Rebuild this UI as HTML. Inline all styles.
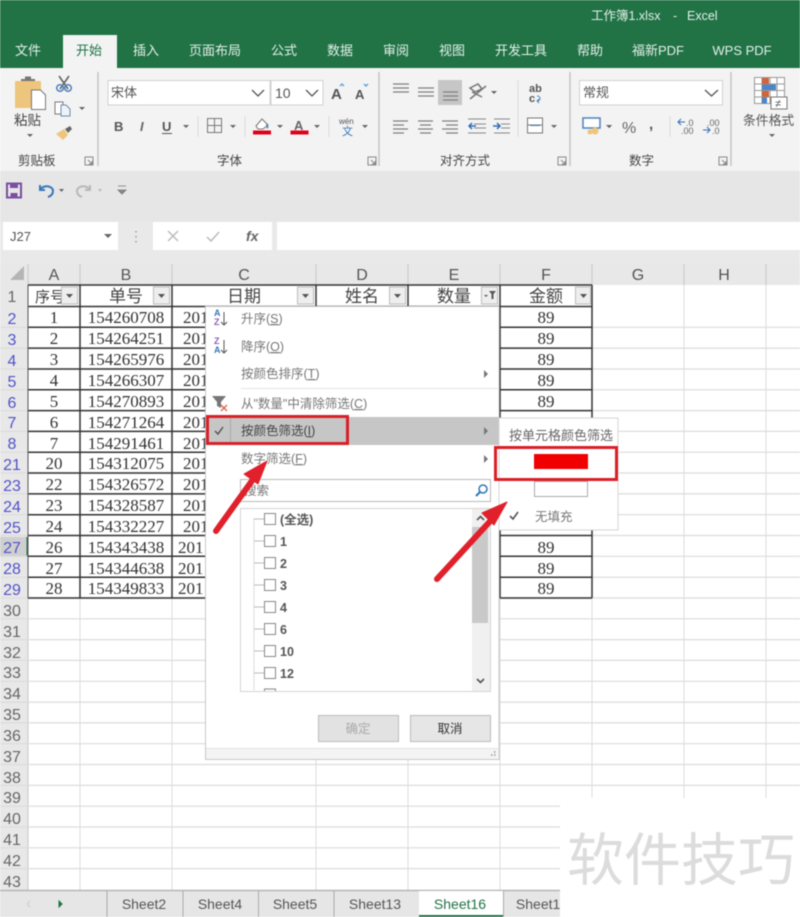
<!DOCTYPE html>
<html lang="zh"><head><meta charset="utf-8"><title>工作簿1.xlsx - Excel</title>
<style>
html,body{margin:0;padding:0;background:#fff;width:800px;height:917px;overflow:hidden}
svg{display:block;filter:blur(.6px)}
text{font-family:"Liberation Sans","Noto Sans CJK SC",sans-serif}
.rib{font-size:12.5px;fill:#555}
.tab{font-size:13px;fill:#e4efe9;text-anchor:middle}
.rh{font-size:16px;fill:#5252c8;text-anchor:middle}
.rg{font-size:16px;fill:#666;text-anchor:middle}
.ch{font-size:16px;fill:#555;text-anchor:middle}
.d{font-family:"Liberation Serif","Noto Serif CJK SC",serif;font-size:17px;fill:#333;text-anchor:middle}
.l{font-family:"Liberation Serif",serif;font-size:17px;fill:#333}
.h{font-family:"Noto Sans CJK SC",sans-serif;font-size:17px;fill:#444;text-anchor:middle}
.m{font-size:12.5px;fill:#777}
.it{font-size:12.5px;fill:#555;font-weight:bold}
.st{font-size:14px;fill:#555;text-anchor:middle}
</style></head><body>
<svg width="800" height="917" viewBox="0 0 800 917" xmlns="http://www.w3.org/2000/svg">
<rect width="800" height="917" fill="#fff"/>
<!-- title / tabs -->
<rect width="800" height="68" fill="#217346"/>
<text x="591" y="20" font-size="12.5" fill="#e4efe9">工作簿1.xlsx</text><text x="673" y="20" font-size="12.5" fill="#e4efe9">-</text><text x="687" y="20" font-size="12.5" fill="#e4efe9">Excel</text>
<rect x="63" y="35" width="54" height="34" fill="#f3f3f3"/>
<text class="tab" x="28" y="55">文件</text><text class="tab" x="89" y="55" style="fill:#217346">开始</text><text class="tab" x="146" y="55">插入</text><text class="tab" x="215" y="55">页面布局</text><text class="tab" x="284" y="55">公式</text><text class="tab" x="340" y="55">数据</text><text class="tab" x="396" y="55">审阅</text><text class="tab" x="452" y="55">视图</text><text class="tab" x="521" y="55">开发工具</text><text class="tab" x="590" y="55">帮助</text><text class="tab" x="658" y="55">福新PDF</text><text class="tab" x="742" y="55">WPS PDF</text>
<!-- ribbon -->
<rect y="68" width="800" height="103" fill="#f3f3f3"/>
<path d="M98 72V166M379 72V166M570 72V166M731 72V166" stroke="#c6c6c6" stroke-width="1.5"/>
<path d="M198 116V137M245 116V137M329 116V137M518 80V137M670 116V137" stroke="#dcdcdc" stroke-width="1"/>
<!-- paste -->
<rect x="15" y="81" width="26" height="27" rx="1" fill="#eec57c"/><path d="M21 81h14v-2h-4v-2.500h-6V79h-4z" fill="#777"/>
<path d="M31.500 90h9l5 5v14.500h-14z" fill="#fff" stroke="#777"/>
<text class="rib" x="14" y="125" style="font-size:13.500px;fill:#444">粘贴</text><path d="M27 134h6l-3 3z" fill="#666"/>
<!-- cut/copy/brush -->
<path d="M59 76l9 13M69 76l-9 13" stroke="#666" stroke-width="1.600" fill="none"/><circle cx="60" cy="88" r="3.300" fill="none" stroke="#4f81bd" stroke-width="1.500"/><circle cx="68" cy="88" r="3.300" fill="none" stroke="#4f81bd" stroke-width="1.500"/>
<path d="M55 102h8v12h-8z" fill="#fff" stroke="#777"/><path d="M61 105h5l4 4v7h-9z" fill="#eef3f9" stroke="#6a8db5"/><path d="M79 107h6l-3 3z" fill="#666"/>
<path d="M56 134l8-5 4 6-5 5z" fill="#eec57c"/><path d="M65 129l5-3 2 3-4 4z" fill="#666"/>
<text class="rib" x="18" y="165" style="fill:#444">剪贴板</text>
<path d="M85 157h8v8h-8z M88 160l4 4m0-3v3h-3" fill="none" stroke="#888"/>
<path d="M368 157h8v8h-8z M371 160l4 4m0-3v3h-3" fill="none" stroke="#888"/>
<path d="M558 157h8v8h-8z M561 160l4 4m0-3v3h-3" fill="none" stroke="#888"/>
<path d="M719 157h8v8h-8z M722 160l4 4m0-3v3h-3" fill="none" stroke="#888"/>
<!-- font -->
<rect x="108" y="80.500" width="162" height="24.500" fill="#fff" stroke="#d0d0d0"/><rect x="271" y="80.500" width="52" height="24.500" fill="#fff" stroke="#d0d0d0"/>
<text class="rib" x="111" y="97" style="font-size:13px">宋体</text><text class="rib" x="275" y="98" style="font-size:14px">10</text>
<path d="M252 90l6 6 6-6M306 90l6 6 6-6" fill="none" stroke="#555" stroke-width="1.300"/>
<text x="331" y="99" font-size="15" fill="#555" font-weight="bold">A</text><path d="M340 86l2-2 2 2" fill="none" stroke="#5b9bd5" stroke-width="1.300"/>
<text x="355" y="99" font-size="13" fill="#555" font-weight="bold">A</text><path d="M364 84l2 2 2-2" fill="none" stroke="#5b9bd5" stroke-width="1.300"/>
<text x="114" y="131" font-size="13" fill="#555" font-weight="bold">B</text><text x="140" y="131" font-size="13" fill="#666" font-style="italic" font-family="Liberation Serif" font-weight="bold">I</text><text x="162" y="131" font-size="13" fill="#555" font-weight="bold">U</text><path d="M162 133.500h10" stroke="#555"/>
<path d="M183 125h6l-3 3zM230 125h6l-3 3zM277 125h6l-3 3zM314 125h6l-3 3zM362 125h6l-3 3zM606 125h6l-3 3z" fill="#666"/>
<path d="M207.500 118.500h14v14h-14zM214.500 118.500v14M207.500 125.500h14" fill="none" stroke="#777"/>
<path d="M256 126l6-7 6 6-5 4h-5z" fill="#fff" stroke="#777"/><path d="M266 124c3 1 3 4 1 5z" fill="#4f81bd"/><rect x="253" y="130.500" width="18" height="4" fill="#e0001a"/>
<text x="294" y="130" font-size="13" fill="#666" font-weight="bold">A</text><rect x="290.500" y="130.500" width="18" height="4" fill="#e0001a"/>
<text x="339" y="124" font-size="8" fill="#555">wén</text><text x="342" y="135" font-size="11" fill="#3a78b8">文</text>
<text class="rib" x="217" y="165" style="fill:#444">字体</text>
<!-- align -->
<g fill="none" stroke="#808080" stroke-width="1.200">
<path d="M393 84h16M393 88h16M393 92h16"/><path d="M418 88h16M418 92h16M418 96h16"/>
<path d="M393 121h15M393 125h11M393 129h15M393 133h11"/><path d="M418 121h15M420 125h11M418 129h15M420 133h11"/><path d="M442 121h16M446 125h12M442 129h16M446 133h12"/>
</g>
<rect x="438" y="80" width="24" height="25" fill="#c6c6c6"/><path d="M443 92h15M443 96h15M443 100h15" stroke="#808080" stroke-width="1.200"/>
<path d="M470 88l8-4 4 5-7 3zM472 92l10 5M470 99l16-13" fill="none" stroke="#777" stroke-width="1.500"/><path d="M491 91h6l-3 3z" fill="#666"/>
<text x="529" y="92" font-size="11" fill="#555" font-weight="bold">ab</text><text x="529" y="102" font-size="11" fill="#555" font-weight="bold">c</text><path d="M537 96c4 0 4 5 0 5M539 99l-2 2 2 2" fill="none" stroke="#4f81bd"/>
<path d="M468 119h18M474 124h12M474 128h12M468 133h18" stroke="#888" fill="none"/>
<path d="M469 126h7M472 123l-3 3 3 3" stroke="#2f6eb5" fill="none" stroke-width="1.500"/>
<path d="M494 119h16M501 124h9M501 128h9M494 133h16" stroke="#888" fill="none"/><path d="M493 126h7M497 123l3 3-3 3" stroke="#2f6eb5" fill="none" stroke-width="1.500"/>
<rect x="527.500" y="118" width="15" height="15" fill="#fff" stroke="#777"/><path d="M527 125h16" stroke="#777"/><path d="M530 125.500h10" stroke="#4f81bd"/><path d="M551 125h6l-3 3z" fill="#666"/>
<text class="rib" x="440" y="165" style="fill:#444">对齐方式</text>
<!-- number -->
<rect x="579.500" y="80.500" width="143" height="24.500" fill="#fff" stroke="#d0d0d0"/><text class="rib" x="583" y="97" style="font-size:13px">常规</text><path d="M705 90l6.500 6 6.500-6" fill="none" stroke="#555" stroke-width="1.300"/>
<rect x="583" y="118" width="17" height="10" fill="#fff" stroke="#4f81bd" stroke-width="1.500"/><circle cx="595" cy="131" r="3.500" fill="#eec57c"/><circle cx="590" cy="132" r="2.500" fill="#eec57c"/>
<path d="M607 125h5l-2.500 3z" fill="#666"/>
<text x="622" y="133" font-size="16" fill="#666">%</text><text x="649" y="129" font-size="15" fill="#555" font-weight="bold">,</text>
<text x="686" y="126" font-size="9" fill="#666">.0</text><text x="681" y="134" font-size="9" fill="#666">.00</text><path d="M678 122h7M681 119l-3 3 3 3" stroke="#2f6eb5" fill="none"/>
<text x="707" y="126" font-size="9" fill="#666">.00</text><text x="712" y="134" font-size="9" fill="#666">.0</text><path d="M703 130h7M707 127l3 3-3 3" stroke="#2f6eb5" fill="none"/>
<text class="rib" x="629" y="165" style="fill:#444">数字</text>
<!-- cond -->
<path d="M754.500 77.500h30v26h-30zM754.500 84h30M754.500 90.500h30M754.500 97h30M762 77.500v26M770 77.500v26M777 77.500v26" fill="#fff" stroke="#999"/>
<rect x="762" y="78" width="7" height="6" fill="#d2643a"/><rect x="762" y="84.500" width="14" height="5.500" fill="#4a86c8"/><rect x="762" y="91" width="7" height="6" fill="#d2643a"/><rect x="762" y="97.500" width="5" height="6" fill="#4a86c8"/>
<rect x="771" y="97" width="16" height="12" fill="#fff" stroke="#777"/><text x="775" y="107" font-size="11" fill="#555">≠</text>
<text class="rib" x="743" y="125" style="fill:#555;font-size:12.800px">条件格式</text><path d="M769 134h6l-3 3z" fill="#666"/>
<!-- QAT -->
<rect y="171" width="800" height="50" fill="#e6e6e6"/>
<rect x="7" y="183.500" width="14" height="14" fill="none" stroke="#7a4ea0" stroke-width="2"/><rect x="10" y="183" width="8" height="5" fill="#7a4ea0"/><rect x="10.500" y="193" width="7" height="4" fill="#7a4ea0"/>
<path d="M40 185v5h5M40 190c4-6 13-4 13 1c0 3-2 5-5 6" fill="none" stroke="#3a78b8" stroke-width="2"/><path d="M59 189h5l-2.500 3z" fill="#666"/>
<path d="M90 185v5h-5M90 190c-4-6-13-4-13 1c0 3 2 5 5 6" fill="none" stroke="#b8b8b8" stroke-width="2"/><path d="M98 189h4l-2 3z" fill="#bbb"/>
<path d="M118 186h8M118 190h8l-4 4z" fill="#888" stroke="#777" stroke-width=".8"/>
<!-- formula bar -->
<rect y="221" width="800" height="43" fill="#e9e9e9"/>
<rect x="3" y="222" width="115" height="28" fill="#fff"/><text x="10" y="241" font-size="13" fill="#555">J27</text><path d="M104 234h8l-4 4z" fill="#666"/>
<path d="M136 231v1.500M136 236v1.500M136 241v1.500" stroke="#999" stroke-width="1.500"/>
<rect x="153" y="222" width="119" height="28" fill="#fff"/><rect x="277" y="222" width="523" height="28" fill="#fff"/>
<path d="M168 231l10 10M178 231l-10 10" stroke="#bbb" stroke-width="1.500"/><path d="M207 237l4 4 8-9" stroke="#bbb" stroke-width="1.500" fill="none"/>
<text x="246" y="241" font-size="14" fill="#666" font-style="italic" font-family="Liberation Serif" font-weight="bold">fx</text>
<!-- headers -->
<rect y="264" width="800" height="21" fill="#e8e8e8"/><rect y="285" width="28" height="605" fill="#e8e8e8"/>
<path d="M24 266v14h-14z" fill="#b5b5b5"/>
<path d="M28 264V890M80 264V285M172 264V285M316 264V285M408 264V285M500 264V285M592 264V285M684 264V285M766 264V285" stroke="#c8c8c8"/>
<rect y="537" width="28" height="20" fill="#cfcfcf"/><path d="M27.500 537v20" stroke="#217346" stroke-width="2"/>
<text class="ch" x="54" y="280">A</text><text class="ch" x="126" y="280">B</text><text class="ch" x="244" y="280">C</text><text class="ch" x="362" y="280">D</text><text class="ch" x="454" y="280">E</text><text class="ch" x="546" y="280">F</text><text class="ch" x="638" y="280">G</text><text class="ch" x="724" y="280">H</text>
<!-- grid -->
<path d="M28 327.300H800M28 348.100H800M28 369H800M28 389.800H800M28 410.600H800M28 431.400H800M28 452.200H800M28 473H800M28 493.900H800M28 514.700H800M28 535.500H800M28 556.300H800M28 577.200H800M28 598H800M28 618.800H800M28 639.600H800M28 660.400H800M28 681.300H800M28 702.100H800M28 722.900H800M28 743.700H800M28 764.500H800M28 785.400H800M28 806.200H800M28 827H800M28 847.800H800M28 868.600H800M0 327.300H28M0 348.100H28M0 369H28M0 389.800H28M0 410.600H28M0 431.400H28M0 452.200H28M0 473H28M0 493.900H28M0 514.700H28M0 535.500H28M0 556.300H28M0 577.200H28M0 598H28M0 618.800H28M0 639.600H28M0 660.400H28M0 681.300H28M0 702.100H28M0 722.900H28M0 743.700H28M0 764.500H28M0 785.400H28M0 806.200H28M0 827H28M0 847.800H28M0 868.600H28" stroke="#dcdcdc" stroke-width="1.200" fill="none"/>
<path d="M80 285V890M172 285V890M316 285V890M408 285V890M500 285V890M592 285V890M684 285V890M766 285V890" stroke="#dcdcdc" fill="none"/>
<!-- row labels -->
<text class="rg" x="12" y="302">1</text>
<g class="r"><text class="rh" x="12" y="324">2</text><text class="rh" x="12" y="345">3</text><text class="rh" x="12" y="366">4</text><text class="rh" x="12" y="387">5</text><text class="rh" x="12" y="408">6</text><text class="rh" x="12" y="428">7</text><text class="rh" x="12" y="449">8</text><text class="rh" x="12" y="470">21</text><text class="rh" x="12" y="491">23</text><text class="rh" x="12" y="512">24</text><text class="rh" x="12" y="533">25</text><text class="rh" x="12" y="553">27</text><text class="rh" x="12" y="574">28</text><text class="rh" x="12" y="595">29</text></g>
<text class="rg" x="12" y="616">30</text><text class="rg" x="12" y="637">31</text><text class="rg" x="12" y="658">32</text><text class="rg" x="12" y="678">33</text><text class="rg" x="12" y="699">34</text><text class="rg" x="12" y="720">35</text><text class="rg" x="12" y="741">36</text><text class="rg" x="12" y="762">37</text><text class="rg" x="12" y="783">38</text><text class="rg" x="12" y="803">39</text><text class="rg" x="12" y="824">40</text><text class="rg" x="12" y="845">41</text><text class="rg" x="12" y="866">42</text><text class="rg" x="12" y="887">43</text>
<!-- table black borders -->
<path d="M28 306.500H592M28 327.300H205M500 327.300H592M28 348.100H205M500 348.100H592M28 369H205M500 369H592M28 389.800H205M500 389.800H592M28 410.600H205M500 410.600H592M28 431.400H205M500 431.400H592M28 452.200H205M500 452.200H592M28 473H205M500 473H592M28 493.900H205M500 493.900H592M28 514.700H205M500 514.700H592M28 535.500H205M500 535.500H592M28 556.300H205M500 556.300H592M28 577.200H205M500 577.200H592M28 598H205M500 598H592M80 285V598M172 285V598M316 285V306M408 285V306M500 285V598M592 285V598M28 285H592" stroke="#333" stroke-width="1.500" fill="none"/>
<path d="M28 285V598" stroke="#555" stroke-width="1"/>
<!-- header row -->
<text class="h" x="50" y="302" style="font-size:15px">序号</text><text class="h" x="126" y="302">单号</text><text class="h" x="244" y="302">日期</text><text class="h" x="362" y="302">姓名</text><text class="h" x="454" y="302">数量</text><text class="h" x="546" y="302">金额</text>
<g fill="#eee" stroke="#bbb"><rect x="61.500" y="287" width="16" height="17"/><rect x="153.500" y="287" width="16" height="17"/><rect x="297.500" y="287" width="16" height="17"/><rect x="389.500" y="287" width="16" height="17"/><rect x="481.500" y="287" width="16" height="17"/><rect x="575.500" y="287" width="15" height="17"/></g>
<path d="M66 294h7l-3.500 4zM158 294h7l-3.500 4zM302 294h7l-3.500 4zM394 294h7l-3.500 4zM580 294h7l-3.500 4zM484 295h4l-2 2z" fill="#555"/><path d="M489 291h7l-2.500 3v5h-2v-5z" fill="#555"/>
<!-- data -->
<text class="d" x="54" y="323">1</text><text class="d" x="126" y="323">154260708</text><text class="l" x="183" y="323">201</text><text class="d" x="546" y="323">89</text>
<text class="d" x="54" y="344">2</text><text class="d" x="126" y="344">154264251</text><text class="l" x="183" y="344">201</text><text class="d" x="546" y="344">89</text>
<text class="d" x="54" y="365">3</text><text class="d" x="126" y="365">154265976</text><text class="l" x="183" y="365">201</text><text class="d" x="546" y="365">89</text>
<text class="d" x="54" y="386">4</text><text class="d" x="126" y="386">154266307</text><text class="l" x="183" y="386">201</text><text class="d" x="546" y="386">89</text>
<text class="d" x="54" y="407">5</text><text class="d" x="126" y="407">154270893</text><text class="l" x="183" y="407">201</text><text class="d" x="546" y="407">89</text>
<text class="d" x="54" y="428">6</text><text class="d" x="126" y="428">154271264</text><text class="l" x="183" y="428">201</text>
<text class="d" x="54" y="449">7</text><text class="d" x="126" y="449">154291461</text><text class="l" x="183" y="449">201</text>
<text class="d" x="54" y="469">20</text><text class="d" x="126" y="469">154312075</text><text class="l" x="183" y="469">201</text>
<text class="d" x="54" y="490">22</text><text class="d" x="126" y="490">154326572</text><text class="l" x="183" y="490">201</text>
<text class="d" x="54" y="511">23</text><text class="d" x="126" y="511">154328587</text><text class="l" x="183" y="511">201</text>
<text class="d" x="54" y="532">24</text><text class="d" x="126" y="532">154332227</text><text class="l" x="183" y="532">201</text>
<text class="d" x="54" y="553">26</text><text class="d" x="126" y="553">154343438</text><text class="l" x="178" y="553">201</text><text class="d" x="546" y="553">89</text>
<text class="d" x="54" y="574">27</text><text class="d" x="126" y="574">154344638</text><text class="l" x="178" y="574">201</text><text class="d" x="546" y="574">89</text>
<text class="d" x="54" y="594">28</text><text class="d" x="126" y="594">154349833</text><text class="l" x="178" y="594">201</text><text class="d" x="546" y="594">89</text>
<!-- filter menu -->
<rect x="205.500" y="306.500" width="293.500" height="453" fill="#fff" stroke="#c8c8c8"/>
<rect x="206" y="748" width="292" height="11" fill="#f4f4f4"/><path d="M206 748.500h292" stroke="#e2e2e2"/>
<path d="M494 752h1.500M491 755h1.500M494 755h1.500" stroke="#999" stroke-width="1.500"/>
<text x="214" y="316" font-size="9" fill="#3a78b8" font-weight="bold">A</text><text x="214" y="325" font-size="9" fill="#8b5fb8" font-weight="bold">Z</text><path d="M224 312v13M221 322l3 3 3-3" stroke="#555" fill="none"/>
<text x="214" y="344" font-size="9" fill="#8b5fb8" font-weight="bold">Z</text><text x="214" y="353" font-size="9" fill="#3a78b8" font-weight="bold">A</text><path d="M224 340v13M221 350l3 3 3-3" stroke="#555" fill="none"/>
<text class="m" x="241" y="323">升序(<tspan text-decoration="underline">S</tspan>)</text>
<text class="m" x="241" y="351">降序(<tspan text-decoration="underline">O</tspan>)</text>
<text class="m" x="241" y="378">按颜色排序(<tspan text-decoration="underline">T</tspan>)</text>
<path d="M484 370l4 4-4 4z" fill="#777"/>
<path d="M241 388.500h257" stroke="#e4e4e4"/>
<path d="M212 396h14l-5 6v6l-4-2v-4z" fill="#777"/><path d="M221 405l6 6m0-6l-6 6" stroke="#e0604a" stroke-width="1.300"/>
<text class="m" x="241" y="408">从"数量"中清除筛选(<tspan text-decoration="underline">C</tspan>)</text>
<rect x="207" y="417" width="292" height="28" fill="#c6c6c6"/><path d="M230.500 418v26" stroke="#aaa"/>
<path d="M215 431l3 3 5-7" stroke="#555" stroke-width="1.500" fill="none"/>
<text class="m" x="241" y="435" style="fill:#444">按颜色筛选(<tspan text-decoration="underline">I</tspan>)</text>
<path d="M484 427l4 4-4 4z" fill="#777"/>
<rect x="207.500" y="416.500" width="140" height="27" fill="none" stroke="#d92027" stroke-width="3"/>
<text class="m" x="241" y="463">数字筛选(<tspan text-decoration="underline">F</tspan>)</text>
<path d="M484 455l4 4-4 4z" fill="#777"/>
<rect x="240.500" y="479.500" width="250" height="22" fill="#fff" stroke="#bbb"/>
<text class="m" x="244" y="495">搜索</text>
<circle cx="483" cy="489" r="4" fill="none" stroke="#2f78b8" stroke-width="1.500"/><path d="M480 492l-4 4" stroke="#2f78b8" stroke-width="2"/>
<rect x="240.500" y="508.500" width="250" height="183" fill="#fff" stroke="#d5d5d5"/>
<rect x="472" y="509" width="18" height="182" fill="#f0f0f0"/><rect x="472" y="527" width="16" height="96" fill="#c9c9c9"/>
<path d="M477 520l3.500-3.500 3.500 3.500M477 679l3.500 3.500 3.500-3.500" fill="none" stroke="#555" stroke-width="1.600"/>
<path d="M254 519V690" stroke="#bbb" stroke-dasharray="1 1" fill="none"/>
<path d="M254 519h10M254 541h10M254 563h10M254 585h10M254 607h10M254 629h10M254 651h10M254 673h10" stroke="#bbb" fill="none"/>
<g fill="#fff" stroke="#888"><rect x="264.500" y="513.500" width="11" height="11"/><rect x="264.500" y="535.500" width="11" height="11"/><rect x="264.500" y="557.500" width="11" height="11"/><rect x="264.500" y="579.500" width="11" height="11"/><rect x="264.500" y="601.500" width="11" height="11"/><rect x="264.500" y="623.500" width="11" height="11"/><rect x="264.500" y="645.500" width="11" height="11"/><rect x="264.500" y="667.500" width="11" height="11"/><path d="M264.500 691v-2h11v2"/></g>
<text class="it" x="280" y="524">(全选)</text><text class="it" x="280" y="546">1</text><text class="it" x="280" y="568">2</text><text class="it" x="280" y="590">3</text><text class="it" x="280" y="612">4</text><text class="it" x="280" y="634">6</text><text class="it" x="280" y="656">10</text><text class="it" x="280" y="678">12</text>
<rect x="318.500" y="715.500" width="80" height="26" fill="#e2e2e2" stroke="#bbb"/><text x="358" y="733" font-size="12.500" fill="#aaa" text-anchor="middle">确定</text>
<rect x="410.500" y="715.500" width="80" height="26" fill="#e6e6e6" stroke="#bbb"/><text x="450" y="733" font-size="12.500" fill="#333" text-anchor="middle">取消</text>
<!-- submenu -->
<rect x="499" y="418" width="119" height="112" fill="#fff" stroke="#d5d5d5"/>
<text x="509" y="440" font-size="13" fill="#666">按单元格颜色筛选</text>
<rect x="534" y="454" width="54" height="15" fill="#f00000"/>
<rect x="495.500" y="447.500" width="121" height="32" fill="none" stroke="#d92027" stroke-width="3"/>
<rect x="534.500" y="481.500" width="53" height="15" fill="#fff" stroke="#aaa"/>
<path d="M510 516l3 3 5-7" stroke="#555" stroke-width="1.600" fill="none"/>
<text x="535" y="521" font-size="12.500" fill="#777">无填充</text>
<!-- arrows -->
<g stroke="#e0202a" stroke-width="6" stroke-linecap="round" fill="#e0202a">
<path d="M216 531L254 478" fill="none"/><path d="M267 461l-23 13 14 10z" stroke-width="1" stroke-linejoin="round"/>
<path d="M437 579L494 517" fill="none"/><path d="M507 502l-25 11 12 12z" stroke-width="1" stroke-linejoin="round"/>
</g>
<!-- sheet tabs -->
<rect y="890" width="800" height="27" fill="#e6e6e6"/><path d="M0 890.500H800" stroke="#b5b5b5" stroke-width="1.500"/>
<path d="M30 901l-3 3 3 3" fill="none" stroke="#ccc"/><path d="M59 901l3 3-3 3z" fill="#217346" stroke="#217346"/>
<path d="M107 891v26M183 891v26M258.500 891v26M334 891v26M503.500 891v26" stroke="#aaa"/>
<rect x="419" y="891" width="84" height="26" fill="#fff"/><path d="M419 916h84" stroke="#217346" stroke-width="2"/>
<text class="st" x="144" y="909">Sheet2</text><text class="st" x="220" y="909">Sheet4</text><text class="st" x="295" y="909">Sheet5</text><text class="st" x="375" y="909">Sheet13</text><text class="st" x="460" y="909" style="fill:#217346">Sheet16</text><text class="st" x="542" y="909">Sheet16</text>
<!-- watermark -->
<rect x="560" y="798" width="240" height="119" fill="#fff"/>
<text x="567" y="880" font-size="57" fill="#dcdcdc" font-family="Noto Sans CJK SC,sans-serif" font-weight="400">软件技巧</text>
</svg>
</body></html>
